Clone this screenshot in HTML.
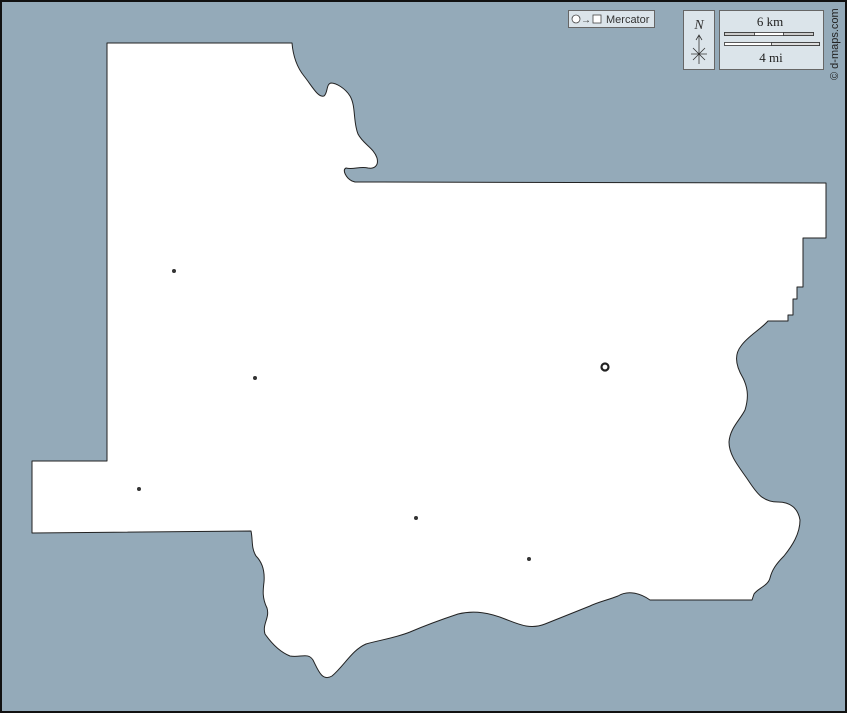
<!DOCTYPE html>
<html><head><style>
body{margin:0;width:847px;height:713px;overflow:hidden;background:#94aab9}
</style></head><body>
<svg width="847" height="713" viewBox="0 0 847 713" xmlns="http://www.w3.org/2000/svg" style="position:absolute;left:0;top:0">
<rect x="1" y="1" width="845" height="711" fill="#94aab9" stroke="#111" stroke-width="2"/>
<path fill="#fff" stroke="#222" stroke-width="1" stroke-linejoin="round" d="M107,43 L292,43 C293,55 296,66 304,76 C312,86 318,98 324,96 C328,93 326,84 331,83 C336,83 345,88 350,96 C356,106 353,122 358,134 C363,144 374,148 377,158 C379,166 374,169 368,168 C360,166 353,170 346,168 C342,170 346,178 352,181 L355,182 L826,183 L826,238 L803,238 L803,287 L797,287 L797,299 L793,299 L793,315 L788,315 L788,321 L768,321 C760,330 748,336 741,346 C733,356 737,368 743,378 C749,390 748,400 745,410 C740,420 730,428 729,442 C729,456 740,468 748,480 C756,492 762,502 778,502 C790,502 798,508 800,520 C800,534 792,546 784,556 C776,564 772,570 770,578 C768,586 758,588 754,594 L752,600 L650,600 C640,593 628,590 618,596 C608,600 598,602 590,606 C575,612 560,618 545,624 C530,630 518,624 505,619 C490,613 475,610 458,614 C440,620 424,626 410,632 C395,638 380,640 366,644 C352,650 344,666 332,676 C322,682 318,670 313,660 C308,652 300,658 290,656 C280,652 272,644 265,634 C262,624 270,618 267,608 C262,598 263,590 264,582 C265,570 262,562 256,556 C251,548 253,540 251,531 L32,533 L32,461 L107,461 Z"/>
<g fill="#333"><circle cx="174" cy="271" r="2"/><circle cx="255" cy="378" r="2"/><circle cx="139" cy="489" r="2"/><circle cx="416" cy="518" r="2"/><circle cx="529" cy="559" r="2"/></g>
<circle cx="605" cy="367" r="3.5" fill="none" stroke="#222" stroke-width="2.2"/>
<rect x="568.5" y="10.5" width="86" height="17" fill="#dbe4ea" stroke="#666"/>
<circle cx="576" cy="19" r="4" fill="#fff" stroke="#444" stroke-width="0.8"/>
<text x="581" y="23" font-family="Liberation Sans,sans-serif" font-size="10" fill="#333">→</text>
<rect x="593" y="15" width="8" height="8" fill="#fff" stroke="#444" stroke-width="0.8"/>
<text x="606" y="23" font-family="Liberation Sans,sans-serif" font-size="11" fill="#333">Mercator</text>
<rect x="683.5" y="10.5" width="31" height="59" fill="#dbe4ea" stroke="#666"/>
<text x="699" y="29" text-anchor="middle" font-family="Liberation Serif,serif" font-style="italic" font-size="14" fill="#333">N</text>
<path d="M699,36 V64 M696,40 L699,35 L702,40 M691,54 H707 M693,48 L705,60 M705,48 L693,60" stroke="#333" stroke-width="0.8" fill="none"/>
<rect x="719.5" y="10.5" width="104" height="59" fill="#dbe4ea" stroke="#666"/>
<text x="770" y="26" text-anchor="middle" font-family="Liberation Serif,serif" font-size="13" fill="#222">6 km</text>
<rect x="724.5" y="32.5" width="89" height="3" fill="#fff" stroke="#333" stroke-width="0.8"/>
<rect x="724.5" y="32.5" width="30" height="3" fill="#ccc" stroke="#333" stroke-width="0.8"/>
<rect x="783.5" y="32.5" width="30" height="3" fill="#ccc" stroke="#333" stroke-width="0.8"/>
<rect x="724.5" y="42.5" width="95" height="3" fill="#fff" stroke="#333" stroke-width="0.8"/>
<rect x="771.5" y="42.5" width="48" height="3" fill="#ddd" stroke="#333" stroke-width="0.8"/>
<text x="771" y="62" text-anchor="middle" font-family="Liberation Serif,serif" font-size="13" fill="#222">4 mi</text>
<text transform="translate(838,80) rotate(-90)" font-family="Liberation Sans,sans-serif" font-size="11" fill="#222">© d-maps.com</text>
</svg>
</body></html>
